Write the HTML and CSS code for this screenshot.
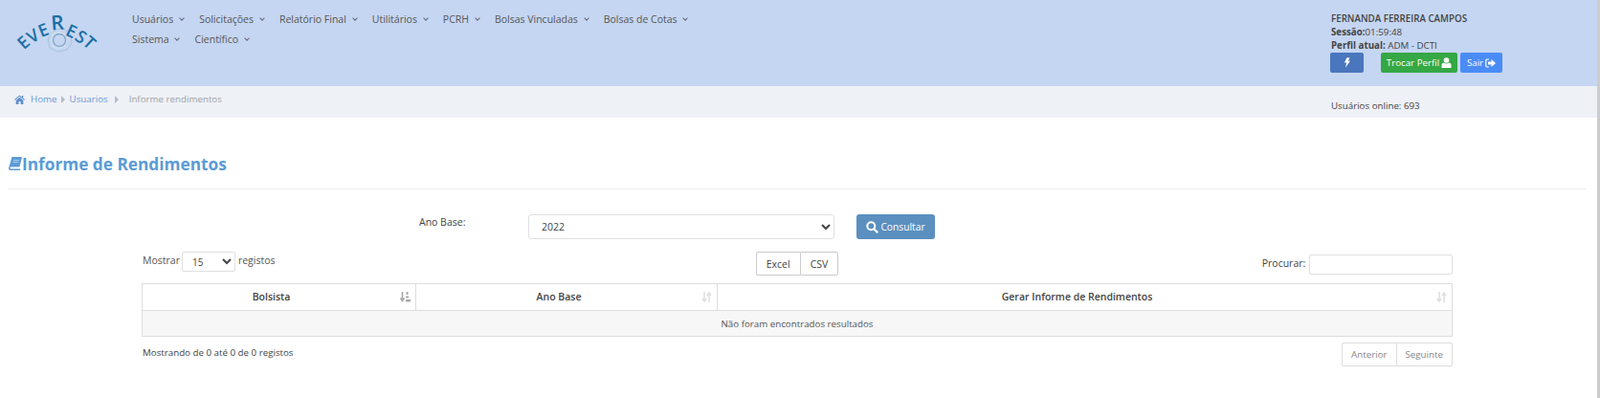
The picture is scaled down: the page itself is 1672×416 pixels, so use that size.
FILE: index.html
```html
<!DOCTYPE html>
<html lang="pt">
<head>
    <meta charset="UTF-8">
    <title>Informe de Rendimentos - Everest</title>
    <link rel="stylesheet" href="styles.css">
</head>
<body>
    <header class="topbar">
        <a class="logo" href="#">
            <svg width="110" height="60" viewBox="0 0 110 60">
                <g fill="none" stroke="#a5c3da" stroke-width="1">
                    <path d="M58 31 l9 -1 l7 6 l1 9 l-5 7 l-10 2 l-8 -4 l-2 -9 z"></path>
                    <circle cx="62" cy="42" r="6.500" stroke="#7fa9c6" stroke-width="1.300"></circle>
                    <path d="M53 37 q8 -6 16 0 M54 48 q8 5 15 -1 M57 33 q-6 8 -1 16" stroke="#d3e2ee"></path>
                </g>
                <g class="logo-text">
                    <text transform="translate(24 44) rotate(-42)">E</text>
                    <text transform="translate(34 37) rotate(-32)">V</text>
                    <text transform="translate(45 31) rotate(-22)">E</text>
                    <text class="logo-big" transform="translate(60 23) rotate(-4)">R</text>
                    <text transform="translate(75 32) rotate(25)">E</text>
                    <text transform="translate(85 38) rotate(34)">S</text>
                    <text transform="translate(94 44) rotate(42)">T</text>
                </g>
            </svg>
        </a>
        <nav class="menu">
            <a href="#">Usuários <i class="caret"></i></a>
            <a href="#">Solicitações <i class="caret"></i></a>
            <a href="#">Relatório Final <i class="caret"></i></a>
            <a href="#">Utilitários <i class="caret"></i></a>
            <a href="#">PCRH <i class="caret"></i></a>
            <a href="#">Bolsas Vinculadas <i class="caret"></i></a>
            <a href="#">Bolsas de Cotas <i class="caret"></i></a>
            <a href="#">Sistema <i class="caret"></i></a>
            <a href="#">Científico <i class="caret"></i></a>
        </nav>
        <div class="user-box">
            <div class="user-name">FERNANDA FERREIRA CAMPOS</div>
            <div><b>Sessão:</b>01:59:48</div>
            <div><b>Perfil atual:</b> ADM - DCTI</div>
            <div class="user-actions">
                <button class="btn-small btn-bolt">
                    <svg width="7" height="11" viewBox="0 0 8 12"><path fill="#fff" d="M4 0h3.400L5.600 4H8L2.200 12l1.400-6H1z"></path></svg>
                </button>
                <button class="btn-small btn-green">Trocar Perfil
                    <svg width="11" height="11" viewBox="0 0 11 11"><circle cx="5.500" cy="3" r="2.800" fill="#fff"></circle><path fill="#fff" d="M0.500 11V8.200C0.500 6.600 1.800 5.600 3 5.600c.7.6 1.500.9 2.500.9s1.800-.3 2.500-.9c1.200 0 2.500 1 2.500 2.600V11z"></path></svg>
                </button>
                <button class="btn-small btn-blue">Sair
                    <svg width="11" height="10" viewBox="0 0 11 10"><path fill="none" stroke="#fff" stroke-width="1.200" d="M4 1H2Q.8 1 .8 2.200v5.600Q.8 9 2 9h2"></path><path fill="#fff" d="M3 3.400h3.500V1L11 5 6.500 9V6.600H3z"></path></svg>
                </button>
            </div>
        </div>
    </header>

    <div class="breadcrumb-bar">
        <div class="breadcrumb">
            <svg class="home-icon" width="11" height="10" viewBox="0 0 12 11"><path fill="#5b8fd0" d="M6 .6 0 5.600l.7.8L6 2l5.300 4.400.7-.8-2-1.700V1H8.500v1.700zM1.800 6.500V11h3V7.800h2.400V11h3V6.500L6 3z"></path></svg>
            <a href="#">Home</a>
            <i class="arrow"></i>
            <a href="#">Usuarios</a>
            <i class="arrow arrow-wide"></i>
            <span>Informe rendimentos</span>
        </div>
        <div class="online">Usuários online: 693</div>
    </div>

    <main>
        <h2 class="page-title">
            <svg width="14" height="14" viewBox="0 0 14 14"><path fill="#5b9bd5" d="M3.500 0H14l-2.500 10.500H2.300Q1.500 10.500 1.500 11.500T2.500 12.500h9.800l-.3 1.500H2Q0 14 0 12z"></path><path fill="#c9dcf0" d="M5 3h6l-.2.8H4.800zM4.500 5.200h6l-.2.8h-6z"></path></svg>Informe de Rendimentos
        </h2>

        <form class="filter-row">
            <label class="filter-label">Ano Base:</label>
            <select class="filter-select"><option>2022</option></select>
            <button type="button" class="btn-search">
                <svg width="13" height="13" viewBox="0 0 13 13"><circle cx="5.300" cy="5.300" r="4" fill="none" stroke="#fff" stroke-width="2"></circle><path stroke="#fff" stroke-width="2.400" stroke-linecap="round" d="M8.500 8.500l3 3"></path></svg>
                Consultar
            </button>
        </form>

        <div class="table-wrap">
            <div class="table-tools">
                <div class="length">Mostrar <select class="length-select"><option>15</option></select> registos</div>
                <div class="export-group">
                    <button class="group-btn">Excel</button>
                    <button class="group-btn">CSV</button>
                </div>
                <div class="search">Procurar: <input class="search-input" type="text"></div>
            </div>

            <table class="data-table">
                <thead>
                    <tr>
                        <th class="col-bolsista">Bolsista
                            <svg class="sort-icon sort-on" width="11" height="11" viewBox="0 0 11 11"><path d="M2.500 0v8M0.500 6.500l2 3 2-3" fill="none" stroke="currentColor" stroke-width="1.600"></path><path fill="currentColor" d="M6.500 0h2v3h-2zM6 4.500h3v2H6zM6 8h5v2.500H6z"></path></svg>
                        </th>
                        <th class="col-ano">Ano Base
                            <svg class="sort-icon" width="11" height="11" viewBox="0 0 11 11"><path d="M3 0v9M1 7l2 3 2-3M8 11V2M6 4l2-3 2 3" fill="none" stroke="currentColor" stroke-width="1.600"></path></svg>
                        </th>
                        <th>Gerar Informe de Rendimentos
                            <svg class="sort-icon" width="11" height="11" viewBox="0 0 11 11"><path d="M3 0v9M1 7l2 3 2-3M8 11V2M6 4l2-3 2 3" fill="none" stroke="currentColor" stroke-width="1.600"></path></svg>
                        </th>
                    </tr>
                </thead>
                <tbody>
                    <tr><td colspan="3">Não foram encontrados resultados</td></tr>
                </tbody>
            </table>

            <div class="table-footer">
                <div class="info">Mostrando de 0 até 0 de 0 registos</div>
                <div class="pager">
                    <a href="#">Anterior</a>
                    <a href="#">Seguinte</a>
                </div>
            </div>
        </div>
    </main>
</body>
</html>
```

FILE: styles.css
```css
:root {
    --header-color: #c5d6f2;
    --crumb-color: #eef1f6;
    --text-color: #555;
    --dark-text: #333;
    --line-color: #ddd;
    --title-color: #5b9bd5;
}

* {
    margin: 0;
    padding: 0;
    box-sizing: border-box;
}

html {
    background-color: #fff;
}

body {
    font-family: 'Open Sans', sans-serif;
    font-size: 9.75px;
    color: var(--dark-text);
    height: 416px;
    border-right: 3px solid #ccc;
    overflow: hidden;
}

a {
    text-decoration: none;
}

/* top bar */
.topbar {
    display: flex;
    height: 90px;
    background-color: var(--header-color);
}

.logo {
    width: 137px;
    flex: none;
}

.logo-text text {
    font-family: 'Open Sans', sans-serif;
    font-size: 18px;
    font-weight: 600;
    fill: #1a6ea6;
    text-anchor: middle;
    dominant-baseline: central;
}

.logo-text .logo-big {
    font-size: 21px;
}

.menu {
    width: 620px;
    padding: 10px 0 0 1px;
    display: flex;
    flex-wrap: wrap;
    align-content: flex-start;
    column-gap: 15.2px;
}

.menu a {
    color: var(--text-color);
    font-size: 10.5px;
    line-height: 21px;
    white-space: nowrap;
}

.caret {
    display: inline-block;
    width: 4px;
    height: 4px;
    border-right: 1px solid #667;
    border-bottom: 1px solid #667;
    transform: rotate(45deg);
    margin: 0 1px 3px 4px;
}

.user-box {
    margin-left: auto;
    width: 278px;
    padding-top: 13px;
    line-height: 14px;
    color: #444;
}

.user-name {
    font-weight: 600;
}

.user-actions {
    display: flex;
    gap: 3px;
}

.btn-small {
    height: 21px;
    border: none;
    border-radius: 2px;
    color: #fff;
    font-family: inherit;
    font-size: 9.75px;
    display: flex;
    align-items: center;
    justify-content: center;
    gap: 2px;
}

.btn-bolt {
    width: 35px;
    background-color: #4a76bd;
    margin-left: -1px;
    margin-right: 15px;
}

.btn-green {
    width: 80px;
    background-color: #35a845;
}

.btn-blue {
    width: 44px;
    background-color: #4a8cf7;
}

/* breadcrumb */
.breadcrumb-bar {
    display: flex;
    height: 33px;
    background-color: var(--crumb-color);
}

.breadcrumb {
    display: flex;
    align-items: center;
    height: 25px;
    padding: 2px 0 0 15px;
    width: 1391px;
    color: #a2a2a2;
}

.breadcrumb a {
    color: #6a9ad8;
}

.home-icon {
    margin-right: 6px;
}

.arrow {
    width: 0;
    height: 0;
    border-left: 4px solid #b4bcc8;
    border-top: 4px solid transparent;
    border-bottom: 4px solid transparent;
    margin: 0 5px 0 4px;
}

.arrow-wide {
    margin: 0 11px 0 7px;
}

.online {
    padding-top: 14px;
    color: #444;
}

/* page */
main {
    padding: 0 11px 0 9px;
}

.page-title {
    display: flex;
    align-items: flex-end;
    height: 75px;
    padding-bottom: 14px;
    border-bottom: 1px solid #eee;
    color: var(--title-color);
    font-size: 17.25px;
    font-weight: 700;
}

.page-title svg {
    margin-bottom: 5px;
}

.filter-row {
    display: flex;
    margin-top: 26px;
    height: 26px;
}

.filter-label {
    margin-left: 429px;
    width: 114px;
    font-size: 10.5px;
    padding-top: 1px;
    color: #444;
}

.filter-select {
    width: 320px;
    height: 26px;
    padding-left: 9px;
    border: 1px solid #e0e0e0;
    border-radius: 3px;
    background-color: #fff;
    font-family: inherit;
    font-size: 10.5px;
    color: #444;
}

.btn-search {
    display: flex;
    align-items: center;
    justify-content: center;
    gap: 2px;
    width: 82px;
    margin-left: 23px;
    border: none;
    border-radius: 3px;
    background-color: #5b8fbf;
    color: #fff;
    font-family: inherit;
    font-size: 10.25px;
}

/* table */
.table-wrap {
    margin: 13px 0 0 139px;
    width: 1370px;
}

.table-tools {
    display: grid;
    grid-template-columns: 1fr auto 1fr;
    align-items: start;
    height: 33px;
}

.length {
    display: flex;
    align-items: flex-start;
    gap: 2px;
    padding-left: 1px;
    font-size: 10.5px;
    line-height: 18px;
    color: #555;
}

.length-select {
    width: 56px;
    height: 21px;
    margin-right: 1px;
    padding-left: 6px;
    border: 1px solid #e0e0e0;
    border-radius: 2px;
    background-color: #fff;
    font-family: inherit;
    font-size: 10px;
    color: #444;
}

.export-group {
    display: flex;
}

.group-btn {
    height: 25px;
    padding: 0 10px;
    border: 1px solid #ccc;
    background-color: #fff;
    font-family: inherit;
    font-size: 10.5px;
    color: #444;
}

.group-btn:first-child {
    border-radius: 2px 0 0 2px;
    border-right: none;
}

.group-btn:last-child {
    border-radius: 0 2px 2px 0;
}

.search {
    margin-top: 3px;
    text-align: right;
    font-size: 10.5px;
    color: #444;
}

.search-input {
    width: 150px;
    height: 21px;
    margin-left: 1px;
    border: 1px solid #e0e0e0;
    border-radius: 2px;
    vertical-align: middle;
}

.data-table {
    width: 100%;
    border-collapse: collapse;
    table-layout: fixed;
    border: 1px solid var(--line-color);
}

.data-table th {
    position: relative;
    height: 28px;
    padding: 0 16px 2px 0;
    border: 1px solid var(--line-color);
    font-weight: 600;
    font-size: 10.5px;
    color: #444;
}

.col-bolsista {
    width: 286px;
}

.col-ano {
    width: 315px;
}

.sort-icon {
    position: absolute;
    right: 5px;
    top: 8px;
    color: #e0e0e0;
}

.sort-on {
    color: #aaa;
}

.data-table td {
    height: 27px;
    background-color: #f7f7f7;
    text-align: center;
    color: #555;
}

.table-footer {
    display: flex;
    justify-content: space-between;
    margin-top: 6px;
}

.info {
    padding: 4px 0 0 1px;
    color: #444;
}

.pager {
    display: flex;
}

.pager a {
    display: flex;
    align-items: center;
    height: 25px;
    padding: 0 9px;
    border: 1px solid #ddd;
    color: #888;
}

.pager a:first-child {
    border-right: none;
    border-radius: 2px 0 0 2px;
}

.pager a:last-child {
    border-radius: 0 2px 2px 0;
}
```
